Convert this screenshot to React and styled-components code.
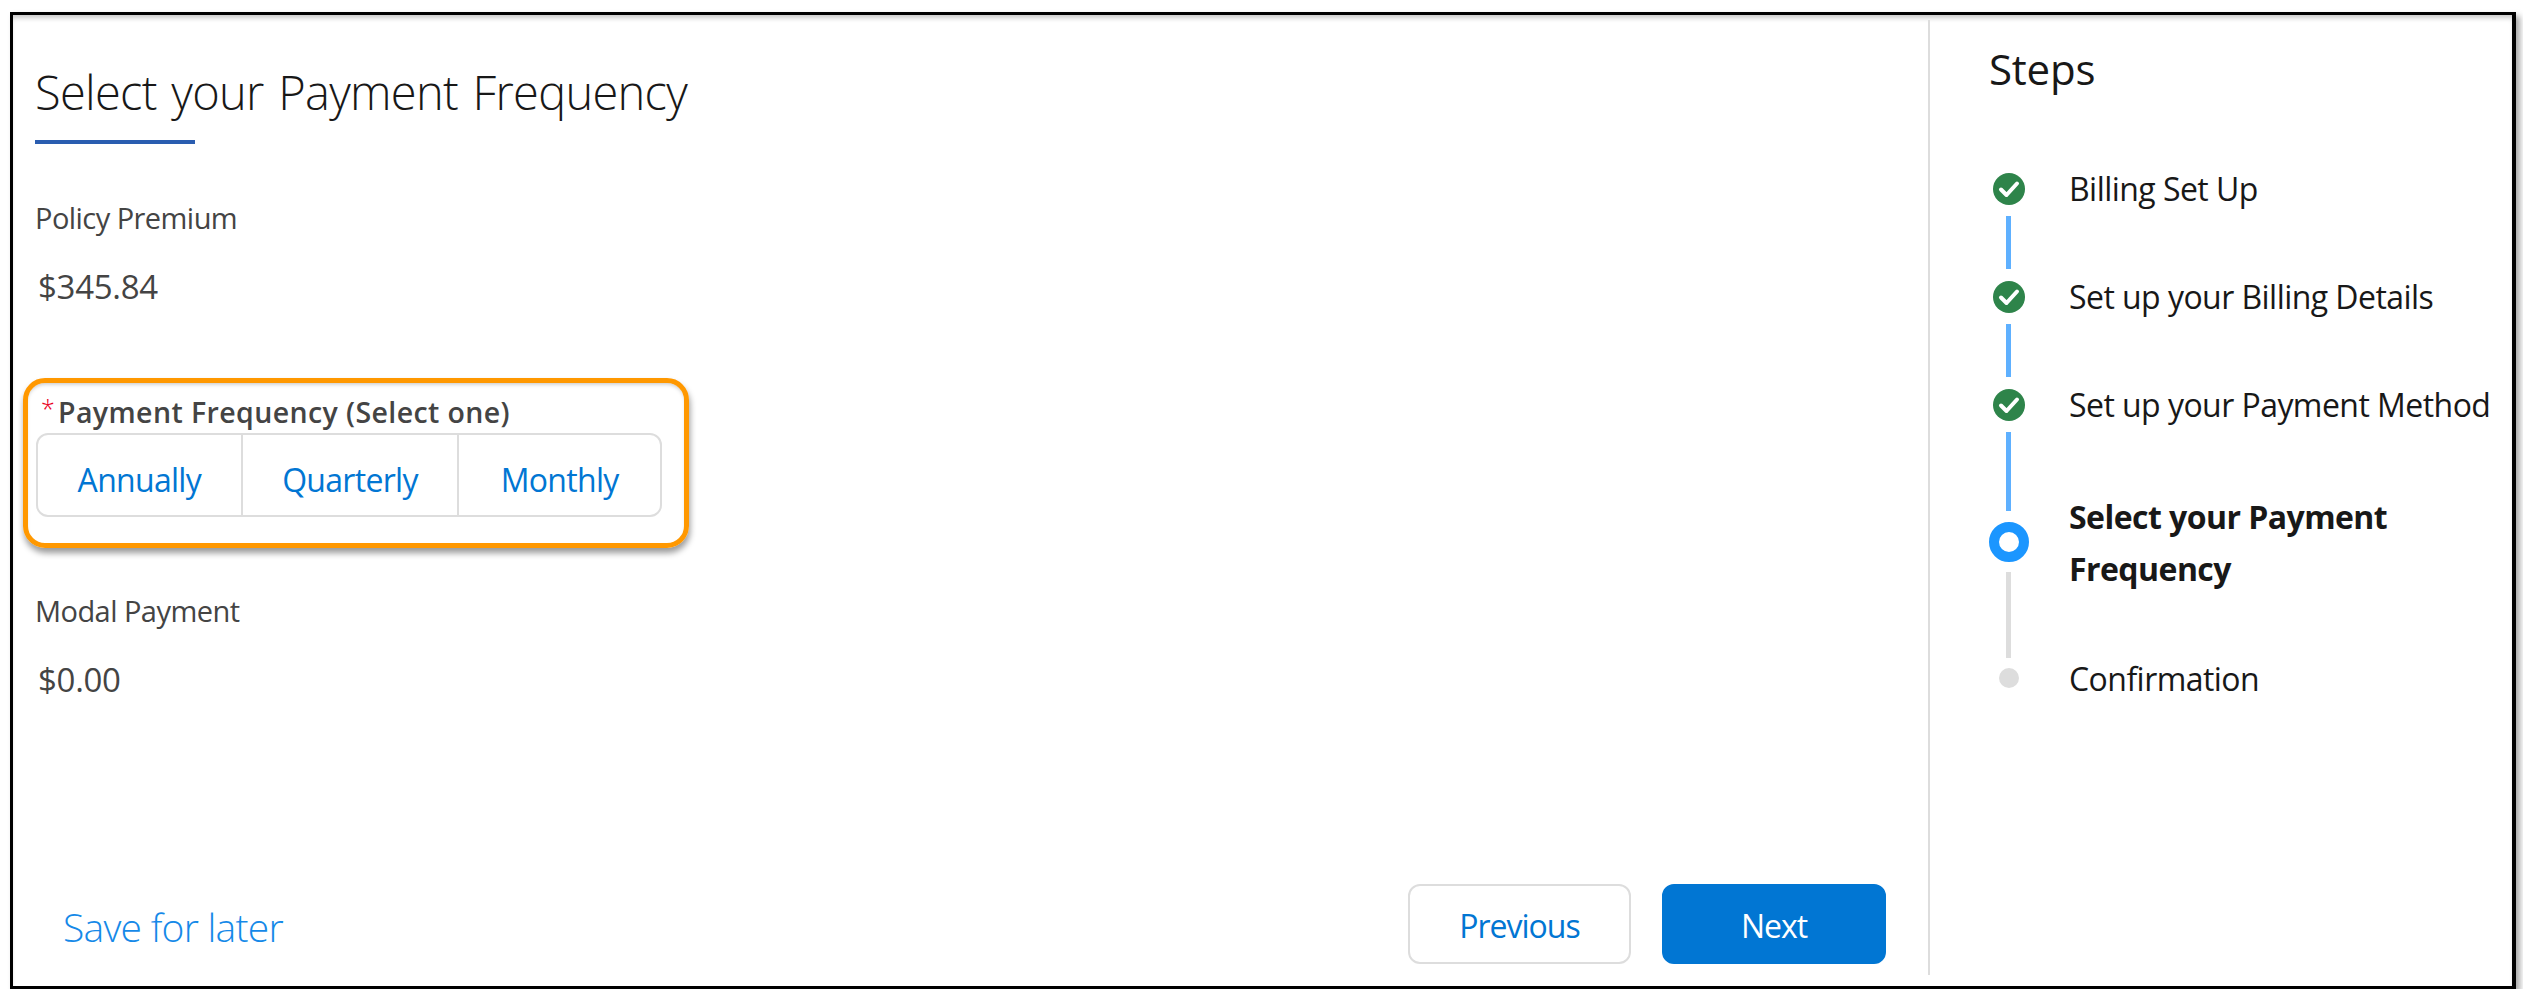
import React from 'react';
import styled, { createGlobalStyle } from 'styled-components';

const fontStack = '"Open Sans", "Noto Sans", "Liberation Sans", sans-serif';

const GlobalStyle = createGlobalStyle`
    html, body {
        margin: 0;
        padding: 0;
        background: #fff;
    }
    body {
        font-family: ${fontStack};
    }
    * {
        box-sizing: border-box;
    }
`;

const steps = [
    { label: 'Billing Set Up', status: 'done', line: 53 },
    { label: 'Set up your Billing Details', status: 'done', line: 53 },
    { label: 'Set up your Payment Method', status: 'done', line: 79 },
    { label: 'Select your Payment Frequency', status: 'active', line: 86 },
    { label: 'Confirmation', status: 'todo' },
];

const CheckMarker = () => (
    <svg width="32" height="32" viewBox="0 0 32 32" aria-hidden="true">
        <circle cx="16" cy="16" r="16" fill="#2e844a" />
        <path
            d="M8 16.5 L13.5 22 L24 10.5"
            fill="none"
            stroke="#fff"
            strokeWidth="4"
            strokeLinecap="round"
            strokeLinejoin="round"
        />
    </svg>
);

const App = () => {
    return (
        <>
            <GlobalStyle />
            <Frame>
                <Main>
                    <Title>Select your Payment Frequency</Title>
                    <TitleRule />
                    <FieldLabel>Policy Premium</FieldLabel>
                    <FieldValue>$345.84</FieldValue>
                    <Highlight>
                        <GroupLabel>
                            <Required>*</Required>
                            Payment Frequency (Select one)
                        </GroupLabel>
                        <Segments>
                            <Segment $width={204}>Annually</Segment>
                            <Segment $width={218}>Quarterly</Segment>
                            <Segment $width={204}>Monthly</Segment>
                        </Segments>
                    </Highlight>
                    <ModalLabel>Modal Payment</ModalLabel>
                    <FieldValue>$0.00</FieldValue>
                    <Footer>
                        <SaveLink>Save for later</SaveLink>
                        <Actions>
                            <Button>Previous</Button>
                            <Button $primary>Next</Button>
                        </Actions>
                    </Footer>
                </Main>
                <Sidebar>
                    <SideTitle>Steps</SideTitle>
                    <StepList>
                        {steps.map((step) => (
                            <Step key={step.label}>
                                <Rail>
                                    {step.status === 'done' && <CheckMarker />}
                                    {step.status === 'active' && <ActiveMarker />}
                                    {step.status === 'todo' && <TodoMarker />}
                                    {step.line && (
                                        <Connector $status={step.status} $height={step.line} />
                                    )}
                                </Rail>
                                <StepLabel $status={step.status}>{step.label}</StepLabel>
                            </Step>
                        ))}
                    </StepList>
                </Sidebar>
            </Frame>
        </>
    );
};

const Frame = styled.div`
    display: flex;
    width: 2506px;
    height: 977px;
    margin: 12px 0 0 10px;
    background: #fff;
    border: 3px solid #000;
    border-right-width: 4px;
    box-shadow: 4px 4px 6px rgba(0, 0, 0, 0.35), inset 0 5px 5px -2px rgba(0, 0, 0, 0.22);
`;

const Main = styled.div`
    display: flex;
    flex-direction: column;
    width: 1915px;
    padding: 45px 42px 22px 22px;
`;

const Title = styled.h1`
    margin: 0;
    font-size: 47px;
    line-height: 64px;
    font-weight: 300;
    color: #181818;
    letter-spacing: -0.7px;
    word-spacing: 3px;
`;

const TitleRule = styled.div`
    width: 160px;
    height: 4px;
    margin-top: 16px;
    background: #2a5db0;
`;

const FieldLabel = styled.div`
    margin-top: 54px;
    font-size: 29px;
    line-height: 40px;
    font-weight: 400;
    color: #444;
    letter-spacing: -0.55px;
`;

const ModalLabel = styled(FieldLabel)`
    margin-top: 43px;
`;

const FieldValue = styled.div`
    margin: 27px 0 0 3px;
    font-size: 33px;
    line-height: 44px;
    font-weight: 400;
    color: #444;
    letter-spacing: -0.3px;
`;

const Highlight = styled.div`
    width: 666px;
    height: 170px;
    margin: 69px 0 0 -12px;
    padding: 10px 0 0 8px;
    border: 5px solid #ff9800;
    border-radius: 22px;
    box-shadow: 1px 5px 6px rgba(0, 0, 0, 0.4), inset 0 3px 4px -2px rgba(0, 0, 0, 0.25);
`;

const GroupLabel = styled.div`
    display: flex;
    height: 40px;
    font-size: 28.5px;
    line-height: 39px;
    font-weight: 600;
    color: #444;
    letter-spacing: 0.4px;
`;

const Required = styled.span`
    width: 22px;
    margin-top: -4px;
    padding-left: 5px;
    font-size: 25px;
    color: #ea001e;
    font-weight: 300;
`;

const Segments = styled.div`
    display: flex;
    width: 626px;
    height: 84px;
    border: 2px solid #ddd;
    border-radius: 12px;
`;

const Segment = styled.div`
    display: flex;
    align-items: center;
    justify-content: center;
    width: ${(p) => p.$width}px;
    padding-top: 8px;
    font-size: 32px;
    color: #0176d3;
    letter-spacing: -0.7px;

    & + & {
        border-left: 2px solid #ddd;
    }
`;

const Footer = styled.div`
    display: flex;
    align-items: center;
    justify-content: space-between;
    margin-top: auto;
`;

const SaveLink = styled.a`
    margin-left: 28px;
    padding-top: 6px;
    font-size: 39px;
    line-height: 50px;
    font-weight: 300;
    color: #1589e8;
    letter-spacing: -0.75px;
`;

const Actions = styled.div`
    display: flex;
    gap: 31px;
`;

const Button = styled.button`
    width: ${(p) => (p.$primary ? 224 : 223)}px;
    height: 80px;
    padding: 3px 0 0;
    border: 2px solid ${(p) => (p.$primary ? '#0176d3' : '#ddd')};
    border-radius: 12px;
    background: ${(p) => (p.$primary ? '#0176d3' : '#fff')};
    color: ${(p) => (p.$primary ? '#fff' : '#0176d3')};
    font-family: ${fontStack};
    font-size: 32px;
    letter-spacing: -1px;
`;

const Sidebar = styled.aside`
    flex: 1;
    margin: 5px 0 11px;
    padding: 21px 0 0 59px;
    border-left: 2px solid #ddd;
`;

const SideTitle = styled.h2`
    margin: 0;
    font-size: 42px;
    line-height: 56px;
    font-weight: 400;
    color: #181818;
    letter-spacing: -0.2px;
`;

const StepList = styled.div`
    display: flex;
    flex-direction: column;
    margin-top: 76px;
`;

const Step = styled.div`
    display: grid;
    grid-template-columns: 40px 1fr;
    column-gap: 40px;
    align-items: start;
`;

const Rail = styled.div`
    display: flex;
    flex-direction: column;
    align-items: center;
    svg {
        display: block;
    }
`;

const ActiveMarker = styled.div`
    width: 40px;
    height: 40px;
    margin-top: -1px;
    border: 10px solid #1b96ff;
    border-radius: 50%;
    background: #fff;
`;

const TodoMarker = styled.div`
    width: 20px;
    height: 20px;
    border-radius: 50%;
    background: #ddd;
`;

const Connector = styled.div`
    width: 5px;
    height: ${(p) => p.$height}px;
    margin: ${(p) => (p.$status === 'active' ? '10px 0' : '11px 0 12px')};
    margin-left: -2px;
    background: ${(p) => (p.$status === 'active' ? '#ddd' : '#5eb0ff')};
`;

const StepLabel = styled.div`
    margin-top: ${(p) => (p.$status === 'active' ? '-32px' : p.$status === 'todo' ? '-9px' : '-4px')};
    font-size: 32px;
    line-height: ${(p) => (p.$status === 'active' ? '52px' : '40px')};
    font-weight: ${(p) => (p.$status === 'active' ? 700 : 400)};
    color: #181818;
    letter-spacing: -0.55px;
`;

export default App;
